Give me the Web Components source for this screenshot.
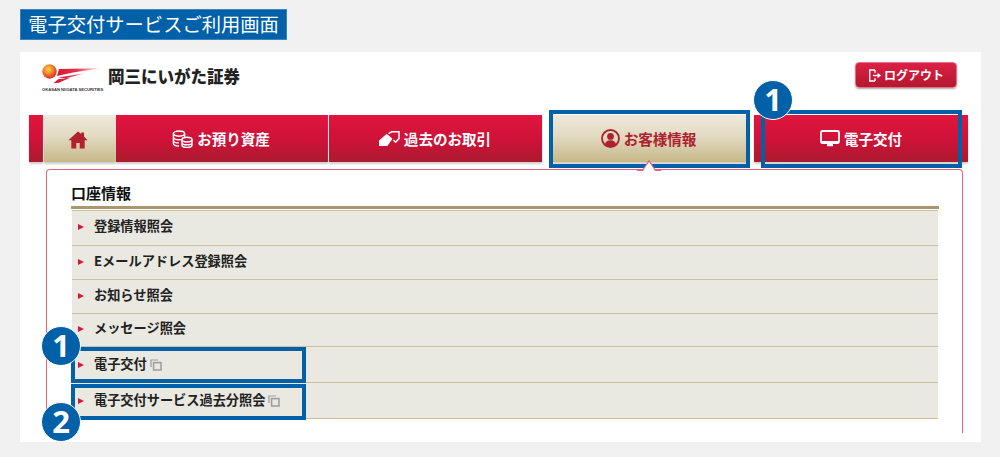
<!DOCTYPE html>
<html lang="ja"><head><meta charset="utf-8"><title>電子交付サービスご利用画面</title>
<style>
html,body{margin:0;padding:0;background:#f1f1f1;font-family:"Noto Sans CJK JP","Noto Sans",sans-serif}
body{width:1000px;height:457px;overflow:hidden}
</style></head><body>
<guide-page>
  <span slot="title">電子交付サービスご利用画面</span>
  <brand-header slot="header"></brand-header>
  <main-nav slot="nav">
    <nav-stub></nav-stub>
    <nav-tab kind="home" w="72" gold><svg slot="icon" width="20" height="18" viewBox="0 0 20 18"><path d="M10 .4 .4 9.200h2.900V17.600h5V12h3.400v5.600h5V9.200h2.900L16 5.600V1.400h-2.700v1.700z" fill="#b0202e"/></svg></nav-tab>
    <nav-tab w="212" line pr="2"><svg slot="icon" width="21" height="18" viewBox="0 0 21 18" fill="none" stroke="#fff" stroke-width="1.400"><ellipse cx="7" cy="3.600" rx="5.600" ry="2.600"/><path d="M1.400 3.600v9.600c0 1.600 2.500 2.800 5.600 2.800M1.400 7c0 1.600 2.500 2.700 5.600 2.700 1 0 2-.1 2.900-.4M1.400 10.200c0 1.500 2.500 2.700 5.600 2.700M12.600 3.600v4"/><ellipse cx="15" cy="9.600" rx="5" ry="2.400"/><path d="M10 9.600v5.400c0 1.400 2.200 2.400 5 2.400s5-1 5-2.400V9.600M10 12.400c0 1.400 2.200 2.400 5 2.400s5-1 5-2.400"/></svg>お預り資産</nav-tab>
    <nav-tab w="213" pr="1"><svg slot="icon" width="21" height="16" viewBox="0 0 21 16"><path d="M0 9.500 7.600 3l2.200 1.400 3.600 3.400-5 7.200H0z" fill="#fff"/><path d="M9.500 2.600 12.800.8H20v6.800l-3.400 3.600-2.200-2.200" fill="none" stroke="#fff" stroke-width="1.500"/></svg>過去のお取引</nav-tab>
    <nav-tab w="194" gold active mark gap="11" pr="3"><svg slot="icon" width="19" height="19" viewBox="0 0 19 19"><circle cx="9.500" cy="9.500" r="8.500" fill="none" stroke="#ad2230" stroke-width="1.800"/><circle cx="9.500" cy="7.400" r="3.400" fill="#ad2230"/><path d="M3.800 15.600c.6-3 2.800-4.400 5.700-4.400s5.100 1.400 5.700 4.400c-1.500 1.300-3.500 2.100-5.700 2.100s-4.200-.8-5.700-2.100z" fill="#ad2230"/></svg>お客様情報</nav-tab>
    <nav-tab w="214" mark2 gap="7"><svg slot="icon" width="20" height="18" viewBox="0 0 20 18"><path d="M2.500 1h15A1.500 1.500 0 0 1 19 2.500v9a1.500 1.500 0 0 1-1.500 1.500h-15A1.500 1.500 0 0 1 1 11.500v-9A1.500 1.500 0 0 1 2.500 1z" fill="none" stroke="#fff" stroke-width="1.800"/><path d="M1 11h18v1.600a1.500 1.500 0 0 1-1.500 1.400h-15A1.500 1.500 0 0 1 1 12.600zM7 14h6v2.200H7z" fill="#fff"/></svg>電子交付</nav-tab>
  </main-nav>
  <info-panel slot="panel" heading="口座情報">
    <menu-row h="36" first>登録情報照会</menu-row>
    <menu-row h="34">Eメールアドレス登録照会</menu-row>
    <menu-row h="34">お知らせ照会</menu-row>
    <menu-row h="33">メッセージ照会</menu-row>
    <menu-row h="36" pb="2" ext box-top="0" box-bottom="-.5">電子交付</menu-row>
    <menu-row h="36" pb="2" ext box-top="1" box-bottom="-1.500">電子交付サービス過去分照会</menu-row>
  </info-panel>
  <num-badge slot="badges" n="1" x="773" y="100"></num-badge>
  <num-badge slot="badges" n="1" x="61" y="346"></num-badge>
  <num-badge slot="badges" n="2" x="61" y="422"></num-badge>
</guide-page>
<script>
const define=(name,html)=>customElements.define(name,class extends HTMLElement{
  connectedCallback(){
    if(this.shadowRoot)return;
    const r=this.attachShadow({mode:"open"});
    r.innerHTML=typeof html==="function"?html(this):html;
  }
});
define("guide-page",`<style>
:host{display:block;position:relative;width:1000px;height:457px;background:#f1f1f1;padding:9px 0 0 20px;box-sizing:border-box}
.title{display:inline-block;vertical-align:top;width:267px;height:31px;box-sizing:border-box;background:#0060a8;border:1px solid #3c84bb;color:#fff;font:400 19.300px/29px "Noto Sans CJK JP",sans-serif;text-align:center;white-space:nowrap}
.card{width:961px;height:390px;margin-top:12px;background:#fff;padding:0 0 0 9px;box-sizing:border-box;overflow:hidden}
</style>
<div class="title"><slot name="title"></slot></div>
<div class="card"><slot name="header"></slot><slot name="nav"></slot><slot name="panel"></slot></div>
<slot name="badges"></slot>`);
define("brand-header",`<style>
:host{display:flex;align-items:flex-start;height:63px;box-sizing:border-box;font-family:"Noto Sans CJK JP",sans-serif}
.logo{margin:12px 0 0 13px;width:60px;display:flex;flex-direction:column}
svg{display:block}
.en{font:700 4.150px/6px "Liberation Sans",sans-serif;color:#333;white-space:nowrap;margin-top:3px}
.name{margin:12.500px 0 0 6px;font:900 16.500px/22px "Noto Sans CJK JP",sans-serif;color:#222;white-space:nowrap}
.out{margin:10px 24px 0 auto;width:102px;height:26px;box-sizing:border-box;border:1px solid #e0738a;border-radius:4px;background:linear-gradient(#dc2045,#b4182f);box-shadow:0 1px 2px #aaa;color:#fff;font:700 12px/24px "Noto Sans CJK JP",sans-serif;display:flex;align-items:center;justify-content:center;gap:2px}
</style>
<div class="logo">
<svg width="58" height="20" viewBox="0 0 58 20"><defs><radialGradient id="b" cx=".42" cy=".35" r=".7"><stop offset="0" stop-color="#fbd44a"/><stop offset=".45" stop-color="#f0882a"/><stop offset="1" stop-color="#d8182c"/></radialGradient><linearGradient id="s"><stop offset="0" stop-color="#d8142e"/><stop offset=".5" stop-color="#e23350"/><stop offset="1" stop-color="#f3a9b6" stop-opacity=".6"/></linearGradient></defs>
<circle cx="7.500" cy="7.500" r="7.200" fill="url(#b)"/><path d="M17 5 58 4.300 31 8.500 15 12zM16 13.500 42 9.500 24 14.200zM11.500 19.300 16 15.200 28 13.800 17 18.800z" fill="url(#s)"/></svg>
<div class="en">OKASAN NIIGATA SECURITIES</div></div>
<div class="name">岡三にいがた証券</div>
<div class="out"><svg width="14" height="13" viewBox="0 0 14 13" fill="none" stroke="#fff" stroke-width="1.400"><path d="M7 1H1.700v11H7M7 3.800v-2.800M7 12V9.200"/><path d="M5 6.500h5" /><path d="M9.500 3.800 13 6.500 9.500 9.200z" fill="#fff" stroke="none"/></svg>ログアウト</div>`);
define("main-nav",`<style>:host{display:flex;height:47px;width:939px;position:relative;z-index:1}</style><slot></slot>`);
define("nav-stub",`<style>:host{display:block;width:14px;height:47px;margin-right:1px;background:linear-gradient(#e2153d 0,#cd1238 55%,#ab1b2e 100%);box-shadow:0 2px 2px #ccc}</style>`);
define("nav-tab",t=>{
 const gold=t.hasAttribute("gold"),w=t.getAttribute("w"),g=t.getAttribute("gap")||0;
 const home=t.getAttribute("kind")==="home",pr=t.getAttribute("pr")||0;
 let extra="",mark="";
 if(t.hasAttribute("mark"))mark=`<i class="box" style="left:-4px;right:-3px"></i>`;
 if(t.hasAttribute("mark2"))mark=`<i class="box" style="left:7px;right:6px"></i>`;
 if(t.hasAttribute("active"))extra=`<svg class="caret" width="24" height="11" viewBox="0 0 24 11"><path d="M0 10.500h5.500L12 .8l6.500 9.700H24V11H0z" fill="#fff"/><path d="M0 10.500h5.500L12 .8l6.500 9.700H24" fill="none" stroke="#e2637a" stroke-width="1.200"/></svg>`;
 return `<style>
:host{display:flex;position:relative;box-sizing:border-box;height:47px;width:${w}px;margin-left:${g}px;
background:${gold?"linear-gradient(#efe9dc,#e3dac2 45%,#c6b887)":"linear-gradient(#e2153d 0,#cd1238 55%,#ab1b2e 100%)"};
color:${gold?"#ad2230":"#fff"};box-shadow:0 2px 2px #ccc;${t.hasAttribute("line")?"margin-right:1px;":""}padding-right:${pr}px;${home?"padding:3px 5px 0 0;":""}
font:700 14.550px/47px "Noto Sans CJK JP",sans-serif;align-items:center;justify-content:center;gap:4px;white-space:nowrap}
.box{position:absolute;top:-5px;bottom:-6px;border:4px solid #0060a8;box-sizing:border-box;pointer-events:none}
.caret{position:absolute;left:84px;top:45px;z-index:2}
svg{display:block}
</style><slot name="icon"></slot><slot></slot>${mark}${extra}`});
define("info-panel",t=>`<style>
:host{display:block;box-sizing:border-box;width:917px;height:264px;margin:7px 0 0 17px;border:1px solid #e2637a;border-bottom:0;border-radius:4px 4px 0 0;padding:15px 23px 0 24px}
h2{margin:0;font:700 15px/16px "Noto Sans CJK JP",sans-serif;color:#111;height:21px}
.rule{height:3px;background:#a9986f;margin-bottom:1px}
.list{margin:0 1px;display:flex;flex-direction:column}
</style><h2>${t.getAttribute("heading")}</h2><div class="rule"></div><div class="list"><slot></slot></div>`);
define("menu-row",t=>{
 const h=t.getAttribute("h"),pb=t.getAttribute("pb")||4;
 const ext=t.hasAttribute("ext")?`<svg class="ext" width="12" height="12" viewBox="0 0 12 12" fill="none" stroke="#9b9b9b" stroke-width="1.200"><path d="M8 1H1v7"/><rect x="3.600" y="3.600" width="7.400" height="7.400" fill="#e9e8e1" stroke-width="1.500"/></svg>`:"";
 const bt=t.getAttribute("box-top");
 const mark=bt!==null?`<i class="box" style="top:${bt}px;bottom:${t.getAttribute("box-bottom")}px"></i>`:"";
 return `<style>
:host{display:flex;align-items:center;position:relative;box-sizing:border-box;height:${h}px;background:#e9e8e1;${t.hasAttribute("first")?"border-top:1px solid #cdbf9f;":""}border-bottom:1.500px solid #cdbf9f;padding:0 0 ${pb}px 6px;font:700 13.200px/20px "Noto Sans CJK JP",sans-serif;color:#222;white-space:nowrap}
.tri{width:0;height:0;border-left:6px solid #d9173c;border-top:3.500px solid transparent;border-bottom:3.500px solid transparent;margin:2px 10px 0 0}
.ext{margin:2px 0 0 3px}
.box{position:absolute;left:-1px;width:235px;border:4px solid #0060a8;box-sizing:border-box}
</style><span class="tri"></span><slot></slot>${ext}${mark}`});
define("num-badge",t=>`<style>
:host{position:absolute;left:${t.getAttribute("x")-20}px;top:${t.getAttribute("y")-20}px;width:40px;height:40px;box-sizing:border-box;border-radius:50%;background:#0060a8;border:1.500px solid #fff;color:#fff;font:700 31px/36px "Noto Sans",sans-serif;text-align:center;z-index:5}
</style>${t.getAttribute("n")}`);
</script>
</body></html>
